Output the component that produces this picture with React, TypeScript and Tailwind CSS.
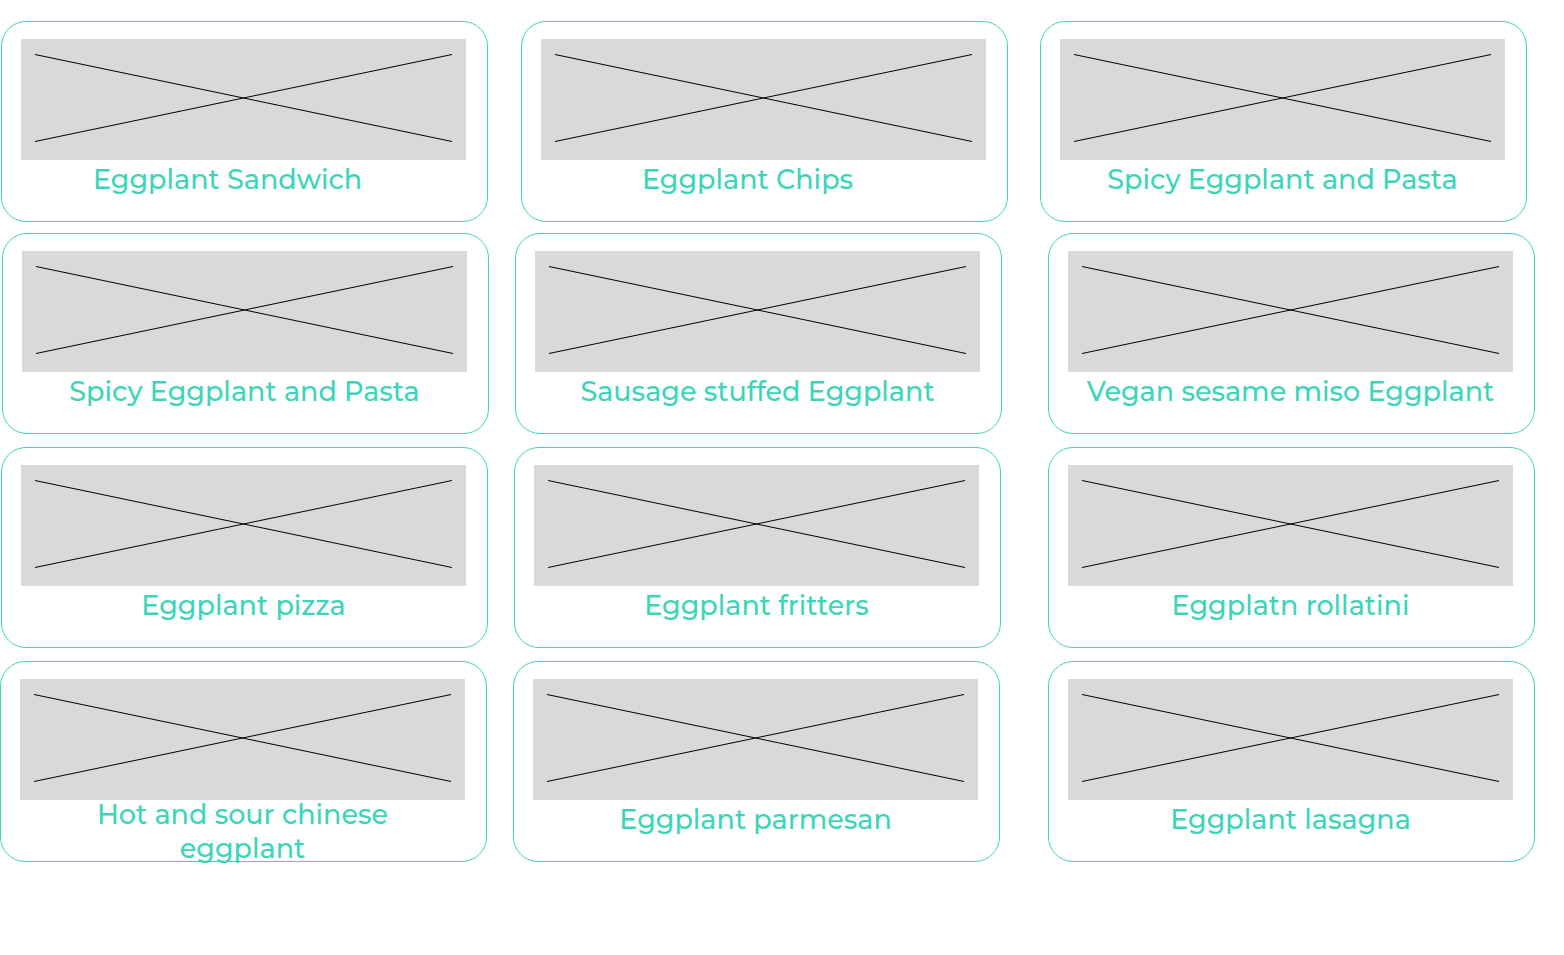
import React from "react";

type Recipe = { name: string; label?: string };
type Row = { layout: string; recipes: Recipe[] };

const shifted = "mt-[3px] pr-8";
const centered = "mt-[3px]";
const wrapped = "-mt-0.5 px-16";

const rows: Row[] = [
  {
    layout: "mb-[11px] gap-[33px] pr-[37px] pl-px *:last:-ml-px",
    recipes: [
      { name: "Eggplant Sandwich", label: shifted },
      { name: "Eggplant Chips", label: shifted },
      { name: "Spicy Eggplant and Pasta" },
    ],
  },
  {
    layout: "mb-[13px] gap-[26px] pr-[29px] pl-0.5 *:last:ml-5",
    recipes: [
      { name: "Spicy Eggplant and Pasta" },
      { name: "Sausage stuffed Eggplant" },
      { name: "Vegan sesame miso Eggplant" },
    ],
  },
  {
    layout: "mb-[13px] gap-[26px] pr-[29px] pl-px *:last:ml-[21px]",
    recipes: [
      { name: "Eggplant pizza" },
      { name: "Eggplant fritters" },
      { name: "Eggplatn rollatini" },
    ],
  },
  {
    layout: "gap-[26px] pr-[29px] *:last:ml-[22px]",
    recipes: [
      { name: "Hot and sour chinese eggplant", label: wrapped },
      { name: "Eggplant parmesan" },
      { name: "Eggplant lasagna" },
    ],
  },
];

function Placeholder() {
  return (
    <svg
      className="block h-[121px] w-full bg-[#d9d9d9]"
      viewBox="0 0 445 121"
      preserveAspectRatio="none"
      aria-hidden="true"
    >
      <path
        d="M14 15.5 431 102.5M14 102.5 431 15.5"
        fill="none"
        stroke="#000"
        strokeWidth="1"
        vectorEffect="non-scaling-stroke"
      />
    </svg>
  );
}

function RecipeCard({ name, label = centered }: Recipe) {
  return (
    <article className="h-[201px] min-w-0 flex-1 rounded-[25px] border border-[#3dd5b9] pt-[17px] pr-[21px] pl-[19px]">
      <Placeholder />
      <h2 className={`text-center text-[27px] leading-[34px] font-medium ${label}`}>{name}</h2>
    </article>
  );
}

export default function App() {
  return (
    <main className="bg-white pt-[21px] pb-24 font-['Montserrat','Inter',sans-serif] text-[#3dd5b9]">
      {rows.map(({ layout, recipes }) => (
        <section key={recipes[0].name + recipes[1].name} className={`flex ${layout}`}>
          {recipes.map((recipe) => (
            <RecipeCard key={recipe.name} {...recipe} />
          ))}
        </section>
      ))}
    </main>
  );
}
